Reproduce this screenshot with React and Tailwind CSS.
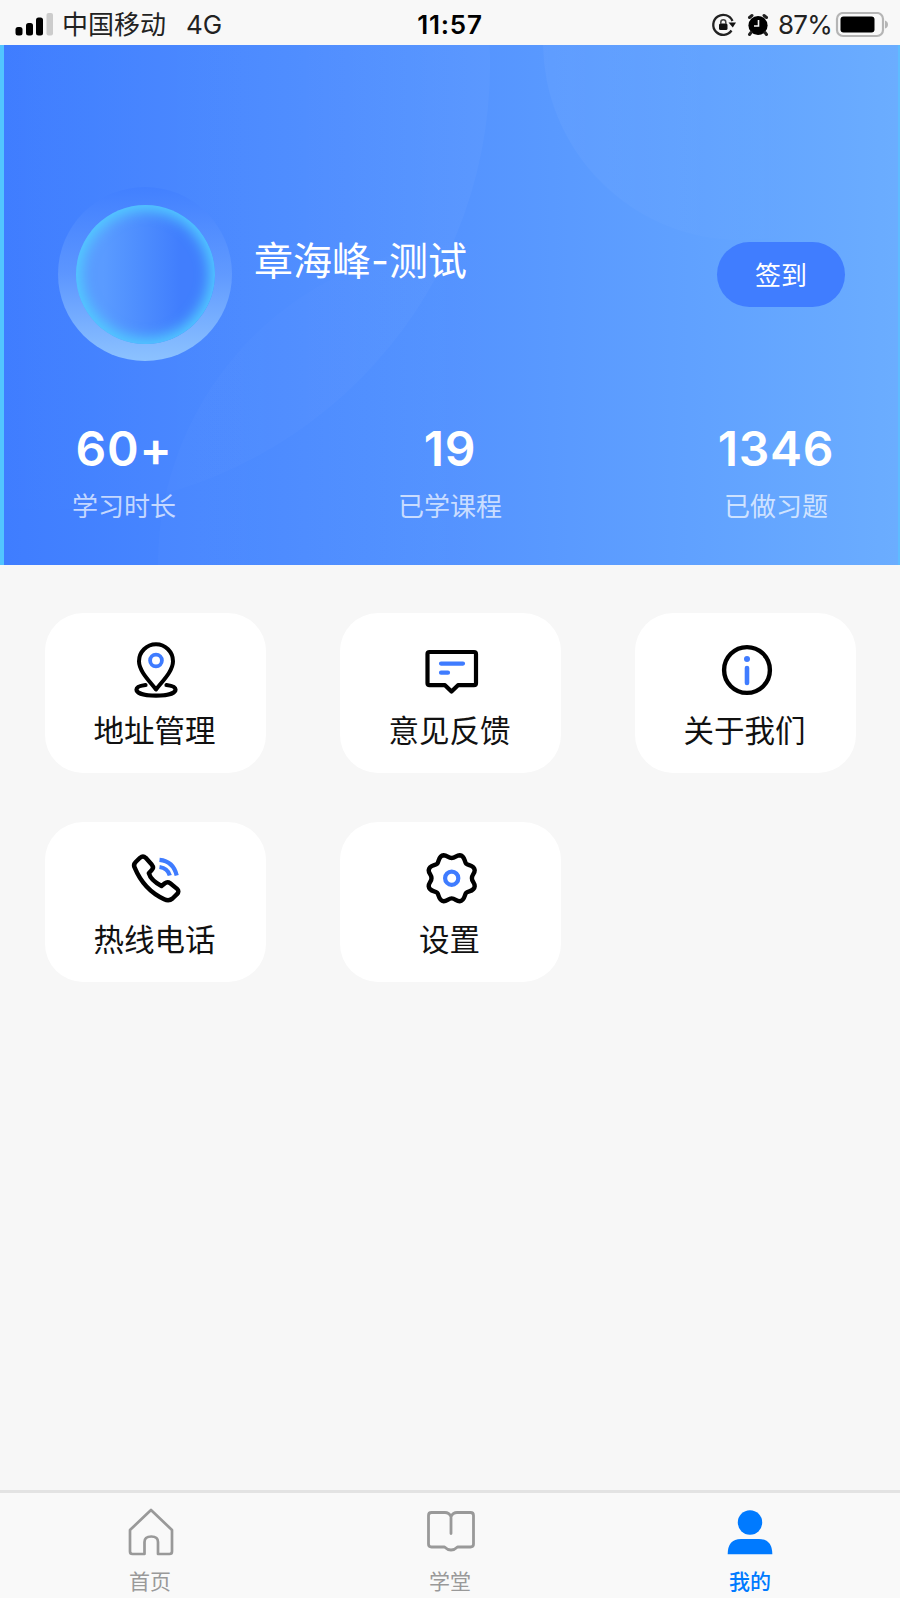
import clsx from 'clsx'

const STATS = [
  { label: '学习时长', value: '60+' },
  { label: '已学课程', value: '19' },
  { label: '已做习题', value: '1346' },
]

function PinIcon() {
  return (
    <svg width="60" height="60" viewBox="0 0 60 60" fill="none">
      <path d="M30 49.500 C24.500 42 13 31.500 13 21.300 A17 17 0 0 1 47 21.300 C47 31.500 35.500 42 30 49.500 Z" stroke="#000" strokeWidth="4" strokeLinejoin="round" />
      <circle cx="30" cy="20.500" r="5.900" stroke="#3f7cff" strokeWidth="3.800" />
      <path d="M19.500 45 C13.500 45.800 10.500 47.400 10.500 49.500 C10.500 53.200 18.500 55.600 30 55.600 S49.500 53.200 49.500 49.500 C49.500 47.400 46.500 45.800 40.500 45" stroke="#000" strokeWidth="4.200" strokeLinecap="round" />
    </svg>
  )
}

function FeedbackIcon() {
  return (
    <svg width="60" height="60" viewBox="0 0 60 60" fill="none">
      <path d="M8.500 12 H53 Q55 12 55 14 V43.200 Q55 45.200 53 45.200 H37 L30.500 51.500 L24 45.200 H8.500 Q6.500 45.200 6.500 43.200 V14 Q6.500 12 8.500 12 Z" stroke="#000" strokeWidth="4.200" strokeLinejoin="round" />
      <path d="M20 23.600 H42 M20 32.700 H27" stroke="#3f7cff" strokeWidth="4.200" strokeLinecap="round" />
    </svg>
  )
}

function AboutIcon() {
  return (
    <svg width="60" height="60" viewBox="0 0 60 60" fill="none">
      <circle cx="31" cy="30" r="22.900" stroke="#000" strokeWidth="4.400" />
      <circle cx="31" cy="19" r="3" fill="#3f7cff" />
      <path d="M31 28 V43" stroke="#3f7cff" strokeWidth="4.600" strokeLinecap="round" />
    </svg>
  )
}

function HotlineIcon() {
  return (
    <svg width="60" height="60" viewBox="0 0 60 60" fill="none">
      <path d="M8.800 18.900 Q7 15.800 9.700 13 L14 8.800 Q17 6.200 19.700 8.800 L25.900 15.800 Q28.100 18.500 25.800 20.900 L22.800 24.200 Q24.800 31.400 35.500 37 L38.900 34.200 Q41.500 32.200 44.200 34.200 L51.100 39.900 Q53.700 42.200 51 45.200 L46.500 49.500 Q43 52.500 38.200 50.200 Q18 41 8.800 18.900 Z" stroke="#000" strokeWidth="4.400" strokeLinejoin="round" />
      <path d="M33.500 10.800 Q47.500 12.200 50.700 26.500 M33.500 18 Q41.800 19.200 43.800 26.500" stroke="#3f7cff" strokeWidth="4.200" />
    </svg>
  )
}

function SettingsIcon() {
  return (
    <svg width="60" height="60" viewBox="0 0 60 60" fill="none">
      <path
        transform="translate(0.7 -0.8)"
        d="M30 9.8 C33.5 9.8 34.5 7 38 7 C43.5 7.5 42.5 13.5 44.5 15.5 C46.5 17.5 52.5 16.5 53 22 C53 25.5 50.2 26.5 50.2 30 C50.2 33.5 53 34.5 53 38 C52.5 43.5 46.5 42.5 44.5 44.5 C42.5 46.5 43.5 52.5 38 53 C34.5 53 33.5 50.2 30 50.2 C26.5 50.2 25.5 53 22 53 C16.5 52.5 17.5 46.5 15.5 44.5 C13.5 42.5 7.5 43.5 7 38 C7 34.5 9.8 33.5 9.8 30 C9.8 26.5 7 25.5 7 22 C7.5 16.5 13.5 17.5 15.5 15.5 C17.5 13.5 16.5 7.5 22 7 C25.5 7 26.5 9.8 30 9.8 Z"
        stroke="#000"
        strokeWidth="4.4"
        strokeLinejoin="round"
      />
      <circle cx="30.7" cy="29.2" r="6.6" stroke="#3f7cff" strokeWidth="4.2" />
    </svg>
  )
}

function HomeIcon() {
  return (
    <svg width="50" height="50" viewBox="0 0 50 50" fill="none" stroke="#999" strokeWidth="2.7" strokeLinejoin="round">
      <path d="M26 3 L47 23 V44.500 Q47 47 44.500 47 H33 V35 Q33 29.500 26.300 29.500 Q19.500 29.500 19.500 35 V47 H7.500 Q5 47 5 44.500 V23 Z" />
    </svg>
  )
}

function BookIcon() {
  return (
    <svg width="50" height="50" viewBox="0 0 50 50" fill="none" stroke="#999" strokeWidth="2.8" strokeLinejoin="round" strokeLinecap="round">
      <path d="M26 26.500 V9.500 Q24 5.500 20 5.500 H6.500 Q3.500 5.500 3.500 8.500 V37 Q3.500 40 6.500 40 H19.500 Q22.500 43 26 43 Q29.500 43 32.500 40 H45.500 Q48.500 40 48.500 37 V8.500 Q48.500 5.500 45.500 5.500 H32 Q28 5.500 26 9.500" />
    </svg>
  )
}

function MineIcon() {
  return (
    <svg width="50" height="50" viewBox="0 0 50 50" fill="#007aff">
      <circle cx="25" cy="15.500" r="12.200" />
      <path d="M2.700 47.300 Q2.700 32 16 32 H34 Q47.300 32 47.300 47.300 Z" />
    </svg>
  )
}

const MENU = [
  { label: '地址管理', icon: PinIcon },
  { label: '意见反馈', icon: FeedbackIcon },
  { label: '关于我们', icon: AboutIcon },
  { label: '热线电话', icon: HotlineIcon },
  { label: '设置', icon: SettingsIcon },
]

const TABS = [
  { label: '首页', icon: HomeIcon },
  { label: '学堂', icon: BookIcon },
  { label: '我的', icon: MineIcon, active: true },
]

function StatusBar() {
  return (
    <div className="grid h-[45px] grid-cols-3 items-center bg-[#f8f8f8] pt-1 text-[26px] leading-none text-[#222]">
      <div className="flex items-center pl-[15px]">
        <svg width="40" height="24" viewBox="0 0 40 24">
          <rect x="0.5" y="14" width="7" height="8.5" rx="2.5" fill="#000" />
          <rect x="11" y="10" width="7" height="12.5" rx="2.5" fill="#000" />
          <rect x="21" y="4.5" width="7" height="18" rx="2.5" fill="#000" />
          <rect x="31.5" y="0" width="6.5" height="22.5" rx="2" fill="#ccc" />
        </svg>
        <span className="ml-[7px]">中国移动</span>
        <span className="ml-5">4G</span>
      </div>
      <div className="text-center text-[26px] font-semibold tracking-[0.8px] text-black">11:57</div>
      <div className="flex items-center justify-end pr-[12px]">
        {/* rotation lock */}
        <svg width="26" height="26" viewBox="0 0 26 26" fill="none">
          <path d="M21.500 9 A10 10 0 1 0 20.500 18.500" stroke="#222" strokeWidth="2.300" />
          <path d="M17.500 10.500 H25 L21.800 15.500 Z" fill="#111" />
          <rect x="8" y="11.500" width="8.500" height="6.500" rx="1.500" fill="#111" />
          <path d="M9.800 12 V10.300 a2.500 2.500 0 0 1 5 0 V12" stroke="#444" strokeWidth="1.500" />
        </svg>
        {/* alarm */}
        <svg width="24" height="26" viewBox="0 0 24 26" fill="none" className="ml-[9px]">
          <circle cx="12" cy="13.500" r="9.600" fill="#000" />
          <path d="M3.500 5.500 L6 3.500 M20.500 5.500 L18 3.500 M5 20.500 L3.500 22.500 M19 20.500 L20.500 22.500" stroke="#222" strokeWidth="3" strokeLinecap="round" />
          <path d="M12.500 8 V14 H8" stroke="#f8f8f8" strokeWidth="1.600" />
        </svg>
        <span className="ml-[8px] tracking-[-0.8px]">87%</span>
        <svg width="53" height="26" viewBox="0 0 53 26" fill="none" className="ml-[3px]">
          <rect x="2" y="1" width="46" height="23" rx="6" stroke="#b5b5b5" strokeWidth="2.200" />
          <rect x="5.500" y="4.500" width="34" height="16" rx="3" fill="#000" />
          <path d="M50 8.500 Q53 9.500 53 12.500 Q53 15.500 50 16.500 Z" fill="#b5b5b5" />
        </svg>
      </div>
    </div>
  )
}

function HeaderBackdrop() {
  return (
    <svg className="absolute inset-0" width="900" height="520" viewBox="0 45 900 520">
      <defs>
        <linearGradient id="ringFade" x1="0.4" y1="0" x2="1" y2="0">
          <stop offset="0" stopColor="#fff" stopOpacity="0" />
          <stop offset="1" stopColor="#fff" stopOpacity="0.03" />
        </linearGradient>
        <linearGradient id="lowFade" x1="0" y1="0" x2="0.6" y2="0">
          <stop offset="0" stopColor="#fff" stopOpacity="0.018" />
          <stop offset="1" stopColor="#fff" stopOpacity="0" />
        </linearGradient>
        <linearGradient id="cornerFade" x1="0" y1="0" x2="0.65" y2="0">
          <stop offset="0" stopColor="#fff" stopOpacity="0.04" />
          <stop offset="1" stopColor="#fff" stopOpacity="0" />
        </linearGradient>
      </defs>
      <circle cx="45" cy="65" r="445" fill="url(#ringFade)" />
      <circle cx="480" cy="565" r="322" fill="url(#lowFade)" />
      <circle cx="741" cy="42" r="198" fill="url(#cornerFade)" />
    </svg>
  )
}

function ProfileHeader() {
  return (
    <header className="relative h-[520px] border-r-2 border-l-4 border-[#52c5ff] border-r-[#5fbcff] bg-linear-to-r from-[#3f7dff] via-[#5493ff] to-[#6badff]">
      <div className="absolute inset-0 -left-1 overflow-hidden">
        <HeaderBackdrop />
      </div>
      <div className="relative flex pt-[142px] pr-[53px] pl-[54px]">
        <div className="flex size-[174px] items-center justify-center rounded-full bg-linear-to-b from-[#3f7dff]/60 via-[#6ea4ff]/60 to-[#8cc2ff]">
          <div className="size-[139px] rounded-full bg-linear-to-r from-[#5a9bff] from-20% to-[#417efd] to-75% shadow-[inset_0_0_13px_6px_#52caff]" />
        </div>
        <h1 className="mt-[47px] ml-[22px] text-[39px] leading-[54px] text-white">章海峰-测试</h1>
        <button className="mt-[55px] ml-auto h-[65px] w-32 rounded-full bg-[#407dff] pt-[3px] text-[26px] leading-none text-white">签到</button>
      </div>
      <div className="relative mt-[63px] flex justify-between pr-[50px] pl-[48px]">
        {STATS.map((s) => (
          <div key={s.label} className="flex w-[144px] flex-col items-center">
            <span className="text-[48px] leading-[50px] font-semibold tracking-[0.8px] text-white [font-feature-settings:'calt'_0]">{s.value}</span>
            <span className="mt-[20px] text-[26px] leading-[26px] text-white/70">{s.label}</span>
          </div>
        ))}
      </div>
    </header>
  )
}

function MenuCard({ label, icon: Icon }) {
  return (
    <button className="flex h-40 flex-col items-center rounded-[38px] bg-white pt-[27px] text-[#111]">
      <Icon />
      <span className="mt-[15px] -ml-[2px] text-[30.5px] leading-8">{label}</span>
    </button>
  )
}

export default function App() {
  return (
    <div className="flex h-[1598px] w-[900px] flex-col overflow-hidden bg-[#f7f7f7] font-['Inter','Noto_Sans_CJK_SC',sans-serif]">
      <StatusBar />
      <ProfileHeader />

      <main className="flex-1 pt-[48px] pr-[44px] pl-[45px]">
        <div className="grid grid-cols-3 gap-x-[74px] gap-y-[49px]">
          {MENU.map((item) => (
            <MenuCard key={item.label} {...item} />
          ))}
        </div>
      </main>

      <nav className="grid h-[108px] grid-cols-3 border-t-3 border-[#e3e3e3] bg-[#f9f9f9]">
        {TABS.map(({ label, icon: Icon, active }) => (
          <div key={label} className={clsx('flex flex-col items-center pt-[14px] text-[21px] leading-6', active ? 'font-medium text-[#007aff]' : 'text-[#999]')}>
            <Icon />
            <span className="mt-[13px]">{label}</span>
          </div>
        ))}
      </nav>
    </div>
  )
}
